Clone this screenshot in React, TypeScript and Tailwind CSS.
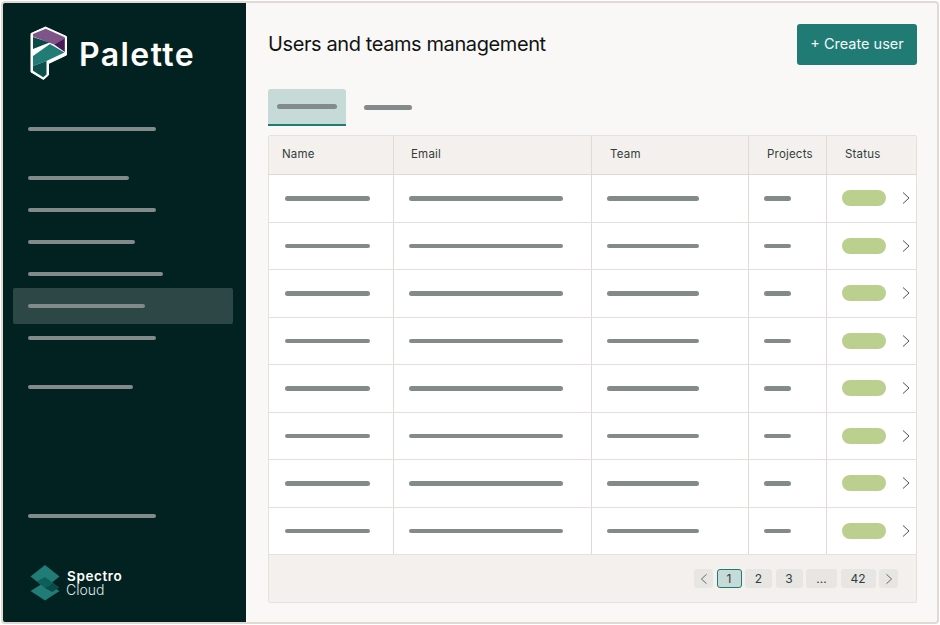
const rowCount = [0, 1, 2, 3, 4, 5, 6, 7];

const Bar = ({ className }: { className: string }) => (
  <div className={`h-[4.5px] rounded-full bg-[#838a8a] ${className}`} />
);

const NavItem = ({ width, active }: { width: string; active?: boolean }) => (
  <div className={active ? 'flex h-[36px] -my-[2px] items-center rounded-[2px] bg-[#2c4745] px-[15px]' : 'flex h-[32px] items-center px-[15px]'}>
    <Bar className={width} />
  </div>
);

const PaletteLogo = () => (
  <svg width="38" height="55" viewBox="0 0 38 55" className="shrink-0">
    <path d="M15.5 1 L36.5 10.5 V29 L18.5 37.5 V49 L13.5 53.5 L1 46 V7.5 Z" fill="#ffffff" stroke="#ffffff" strokeWidth="1" strokeLinejoin="round" />
    <polygon points="3,8 15.7,2.8 34.8,11.3 34.8,13 24,18.5 3,10.5" fill="#7f5488" />
    <polygon points="24,18.5 34.8,12.5 34.8,26" fill="#4a1a55" />
    <polygon points="3,11 3,23 19.5,16.5" fill="#0d4a46" />
    <polygon points="3,30 20,18 34.5,26.5 16.5,35 3,40" fill="#227c76" />
    <polygon points="3,40 16.5,35 16.5,48.5 13.3,51.2 3,44.8" fill="#0d4f4b" />
  </svg>
);

const SpectroLogo = () => (
  <svg width="30" height="36" viewBox="0 0 30 36" className="shrink-0">
    <polygon points="15,17 29.5,26 15,35.5 0.5,26" fill="#227c76" />
    <polygon points="15,0 29.5,11.5 15,23 0.5,11.5" fill="#227c76" />
    <polygon points="7,16.5 15,12 24,18.5 15,23" fill="#0c5f5a" />
    <polygon points="15,23 24,18.5 29.5,22.5 22,27" fill="#0a4a47" />
  </svg>
);

const HeaderCell = ({ label, className }: { label: string; className: string }) => (
  <div className={`flex items-center border-r border-[#e0dad3] text-[11.5px] tracking-[0.2px] text-[#333d3c] ${className}`}>{label}</div>
);

const Chevron = ({ dir, size = 14 }: { dir: 'left' | 'right'; size?: number }) => (
  <svg width={size} height={size} viewBox="0 0 14 14" fill="none" stroke="#4b5453" strokeWidth="1" className="shrink-0">
    <path d={dir === 'right' ? 'M4 1.5 L10 7 L4 12.5' : 'M10 1.5 L4 7 L10 12.5'} />
  </svg>
);

const PageButton = ({ children, className }: { children: React.ReactNode; className: string }) => (
  <div className={`flex h-[19px] items-center justify-center rounded-[3px] text-[12px] text-[#333d3c] ${className}`}>{children}</div>
);

export default function App() {
  return (
    <div className="h-[625px] w-[940px] overflow-hidden bg-white p-px font-['Inter',sans-serif]">
      <div className="flex h-[623px] w-[938px] overflow-hidden rounded-[4px] border-2 border-[#e0dad3] bg-[#faf8f6]">
        <aside className="flex w-[243px] shrink-0 flex-col bg-[#022221] pl-[10px] pr-[13px] pt-[23px]">
          <div className="flex h-[55px] items-center gap-[11px] pl-[17px]">
            <PaletteLogo />
            <span className="pt-[2px] text-[32px] font-semibold leading-none tracking-[1.4px] text-white">Palette</span>
          </div>
          <div className="mt-[32px] flex flex-col">
            <NavItem width="w-[128px]" />
            <div className="h-[17px]" />
            <NavItem width="w-[101px]" />
            <NavItem width="w-[128px]" />
            <NavItem width="w-[107px]" />
            <NavItem width="w-[135px]" />
            <NavItem width="w-[117px]" active />
            <NavItem width="w-[128px]" />
            <div className="h-[17px]" />
            <NavItem width="w-[105px]" />
          </div>
          <div className="mt-[97px] flex flex-col">
            <NavItem width="w-[128px]" />
          </div>
          <div className="mt-[33px] flex items-center gap-[7px] pl-[17px]">
            <SpectroLogo />
            <div className="flex flex-col text-white">
              <span className="text-[13.5px] font-semibold leading-[14px] tracking-[0.6px]">Spectro</span>
              <span className="-ml-px text-[14px] font-light leading-[14px] text-[#dfe5e4]">Cloud</span>
            </div>
          </div>
        </aside>

        <main className="flex min-w-0 flex-1 flex-col pl-[22px] pr-[20px] pt-[21px]">
          <div className="flex h-[40px] items-center justify-between">
            <h1 className="text-[20px] font-normal leading-none tracking-[-0.4px] text-[#0f1413]">Users and teams management</h1>
            <button className="h-[41px] w-[120px] rounded-[3px] bg-[#217b75] text-[14.5px] text-[#f2f7f6]">+ Create user</button>
          </div>

          <div className="mt-[25px] flex h-[37px] items-center">
            <div className="flex h-[37px] w-[78px] items-center justify-center rounded-t-[3px] border-b-2 border-[#217b75] bg-[#c6dad7]">
              <Bar className="w-[60px]" />
            </div>
            <Bar className="ml-[18px] w-[48px]" />
          </div>

          <div className="mt-[9px] w-[649px] overflow-hidden rounded-[2px] border border-[#e5e0da] bg-white">
            <div className="grid h-[39px] grid-cols-[125px_198px_157px_78px_1fr] border-b border-[#e0dad3] bg-[#f3f0ed]">
              <HeaderCell label="Name" className="pl-[13px]" />
              <HeaderCell label="Email" className="pl-[17px]" />
              <HeaderCell label="Team" className="pl-[18px]" />
              <HeaderCell label="Projects" className="pl-[18px]" />
              <div className="flex items-center pl-[18px] text-[11.5px] tracking-[0.2px] text-[#333d3c]">Status</div>
            </div>
            {rowCount.map((row) => (
              <div key={row} className="grid h-[47.5px] grid-cols-[125px_198px_157px_78px_1fr] border-b border-[#e5e0da]">
                <div className="flex items-center border-r border-[#e0dad3] pl-[16px]"><Bar className="w-[85px]" /></div>
                <div className="flex items-center border-r border-[#e0dad3] pl-[15px]"><Bar className="w-[154px]" /></div>
                <div className="flex items-center border-r border-[#e0dad3] pl-[15px]"><Bar className="w-[92px]" /></div>
                <div className="flex items-center border-r border-[#e0dad3] pl-[15px]"><Bar className="w-[27px]" /></div>
                <div className="flex items-center pl-[15px]">
                  <div className="h-[16px] w-[44px] rounded-full bg-[#bbcf8f]" />
                  <div className="ml-[13px]"><Chevron dir="right" size={14} /></div>
                </div>
              </div>
            ))}
            <div className="flex h-[47px] items-center justify-end gap-[3.5px] bg-[#f3f0ed] pr-[18px]">
              <PageButton className="w-[19px] bg-[#e7e6e3]"><Chevron dir="left" size={12} /></PageButton>
              <PageButton className="w-[25px] border border-[#217b75] bg-[#c6dad7]">1</PageButton>
              <PageButton className="w-[27px] bg-[#e7e6e3]">2</PageButton>
              <PageButton className="w-[27px] bg-[#e7e6e3]">3</PageButton>
              <PageButton className="w-[31px] bg-[#e7e6e3]">...</PageButton>
              <PageButton className="w-[35px] bg-[#e7e6e3]">42</PageButton>
              <PageButton className="w-[19px] bg-[#e7e6e3]"><Chevron dir="right" size={12} /></PageButton>
            </div>
          </div>
        </main>
      </div>
    </div>
  );
}
